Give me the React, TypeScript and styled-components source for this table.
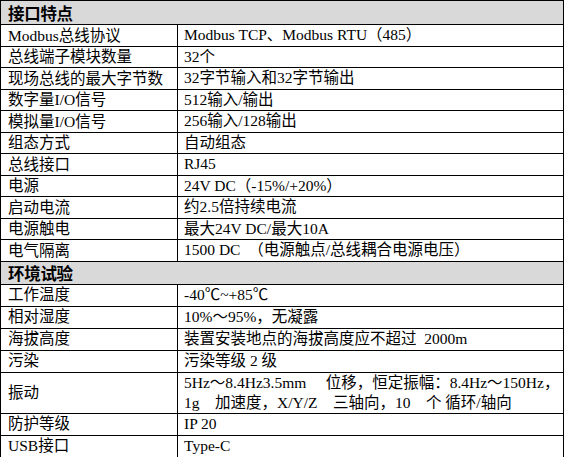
import React from 'react';
import styled, { createGlobalStyle } from 'styled-components';

const GlobalStyle = createGlobalStyle`
  html, body {
    margin: 0;
    padding: 0;
    background: #fff;
  }
`;

type Spec = { label: string; value: string[]; tall?: boolean };

const interfaceRows: Spec[] = [
  { label: 'Modbus总线协议', value: ['Modbus TCP、Modbus RTU（485）'] },
  { label: '总线端子模块数量', value: ['32个'] },
  { label: '现场总线的最大字节数', value: ['32字节输入和32字节输出'] },
  { label: '数字量I/O信号', value: ['512输入/输出'] },
  { label: '模拟量I/O信号', value: ['256输入/128输出'] },
  { label: '组态方式', value: ['自动组态'] },
  { label: '总线接口', value: ['RJ45'] },
  { label: '电源', value: ['24V DC（-15%/+20%）'] },
  { label: '启动电流', value: ['约2.5倍持续电流'] },
  { label: '电源触电', value: ['最大24V DC/最大10A'] },
  { label: '电气隔离', value: ['1500 DC　（电源触点/总线耦合电源电压）'] },
];

const envRows: Spec[] = [
  { label: '工作温度', value: ['-40℃~+85℃'] },
  { label: '相对湿度', value: ['10%～95%，无凝露'] },
  { label: '海拔高度', value: ['装置安装地点的海拔高度应不超过  2000m'] },
  { label: '污染', value: ['污染等级 2 级'] },
  {
    label: '振动',
    value: ['5Hz～8.4Hz3.5mm　 位移，恒定振幅：8.4Hz～150Hz，', '1g　加速度，X/Y/Z　三轴向，10　个 循环/轴向'],
    tall: true,
  },
  { label: '防护等级', value: ['IP 20'] },
  { label: 'USB接口', value: ['Type-C'] },
];

export default function App() {
  return (
    <>
      <GlobalStyle />
      <Table>
        <SectionHeader first>接口特点</SectionHeader>
        {interfaceRows.map((r) => (
          <Row key={r.label} height="20.5px">
            <Label>{r.label}</Label>
            <Value>
              {r.value.map((v) => (
                <Line key={v}>{v}</Line>
              ))}
            </Value>
          </Row>
        ))}
        <SectionHeader>环境试验</SectionHeader>
        {envRows.map((r) => (
          <Row key={r.label} height={r.tall ? '40px' : '21px'}>
            <Label>{r.label}</Label>
            <Value>
              {r.value.map((v) => (
                <Line key={v}>{v}</Line>
              ))}
            </Value>
          </Row>
        ))}
      </Table>
    </>
  );
}

const Table = styled.div`
  width: 564px;
  box-sizing: border-box;
  border-top: 1px solid #000;
  border-left: 1px solid #000;
  border-right: 1px solid #000;
  font-family: 'Liberation Serif', 'Noto Sans CJK SC', serif;
  font-size: 15.5px;
  color: #000;
`;

const SectionHeader = styled.div<{ first?: boolean }>`
  height: ${(p) => (p.first ? '23px' : '22px')};
  display: flex;
  align-items: center;
  padding-left: 7px;
  background: #d9d9d9;
  border-bottom: 1px solid #000;
  font-family: 'Noto Sans CJK SC', sans-serif;
  font-weight: 700;
  font-size: 16.5px;
  letter-spacing: -0.3px;
`;

const Row = styled.div<{ height: string }>`
  display: grid;
  grid-template-columns: 177px 1fr;
  height: ${(p) => p.height};
  border-bottom: 1px solid #000;
`;

const Label = styled.div`
  display: flex;
  align-items: center;
  padding-left: 7px;
  border-right: 1px solid #000;
  white-space: nowrap;
  overflow: hidden;
  line-height: 1;
`;

const Value = styled.div`
  display: flex;
  flex-direction: column;
  justify-content: center;
  padding-left: 6px;
  white-space: pre;
  overflow: hidden;
  gap: 4px;
`;

const Line = styled.div`
  line-height: 16px;
`;
